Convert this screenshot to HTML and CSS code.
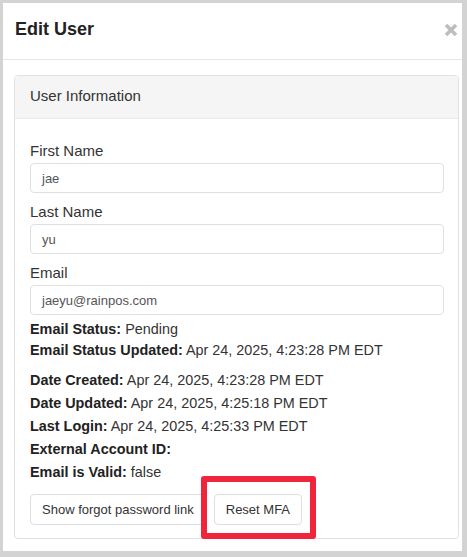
FILE: index.html
```html
<!DOCTYPE html>
<html lang="en">
<head>
<meta charset="utf-8">
<title>Edit User</title>
<link rel="stylesheet" href="styles.css">
</head>
<body>
<div class="modal">
  <div class="modal-header">
    <h4 class="modal-title">Edit User</h4>
    <button class="close" aria-label="Close">
      <svg width="14" height="14" viewBox="0 0 14 14"><path d="M2 2 L12 12 M12 2 L2 12" stroke="#bdbdbd" stroke-width="3.6" stroke-linecap="butt"/></svg>
    </button>
  </div>
  <div class="modal-body">
    <div class="panel">
      <div class="panel-heading">User Information</div>
      <div class="panel-body">
        <div class="field">
          <label class="label">First Name</label>
          <div class="input">jae</div>
        </div>
        <div class="field">
          <label class="label">Last Name</label>
          <div class="input">yu</div>
        </div>
        <div class="field field-last">
          <label class="label">Email</label>
          <div class="input">jaeyu@rainpos.com</div>
        </div>
        <div class="info info-a">
          <div><b>Email Status:</b> Pending</div>
          <div><b>Email Status Updated:</b> Apr 24, 2025, 4:23:28 PM EDT</div>
        </div>
        <div class="info info-b">
          <div><b>Date Created:</b> Apr 24, 2025, 4:23:28 PM EDT</div>
          <div><b>Date Updated:</b> Apr 24, 2025, 4:25:18 PM EDT</div>
          <div><b>Last Login:</b> Apr 24, 2025, 4:25:33 PM EDT</div>
          <div><b>External Account ID:</b></div>
          <div><b>Email is Valid:</b> false</div>
        </div>
        <div class="actions">
          <button class="btn">Show forgot password link</button>
          <span class="highlight"><button class="btn">Reset MFA</button></span>
        </div>
      </div>
    </div>
  </div>
</div>
</body>
</html>
```
FILE: styles.css
```css
* { box-sizing: border-box; }
html, body { margin: 0; }
body {
  background: #d3d3d3;
  padding: 3px 5px 6px 3px;
  font-family: "Liberation Sans", Arial, Helvetica, sans-serif;
  color: #333;
  width: 467px;
  height: 557px;
  overflow: hidden;
}
.modal {
  background: #fff;
  width: 459px;
  height: 548px;
}
.modal-header {
  height: 57px;
  border-bottom: 1px solid #e6e6e6;
  display: flex;
  align-items: center;
  justify-content: space-between;
  padding: 0 4px 3px 12px;
}
.modal-title {
  margin: 0;
  font-size: 18px;
  font-weight: bold;
  color: #222;
}
.close {
  border: 0;
  background: none;
  padding: 0;
  width: 14px;
  height: 14px;
  display: flex;
}
.modal-body {
  padding: 15px 3px 12px 11px;
}
.panel {
  border: 1px solid #e1e1e1;
  border-radius: 4px;
}
.panel-heading {
  height: 43px;
  background: #f5f5f5;
  border-bottom: 1px solid #e9e9e9;
  border-radius: 3px 3px 0 0;
  display: flex;
  align-items: center;
  padding: 0 15px 3px;
  font-size: 15px;
  color: #333;
}
.panel-body {
  padding: 22px 14px 13px 15px;
}
.field { margin-bottom: 9px; }
.field-last { margin-bottom: 4px; }
.label {
  display: block;
  font-size: 15px;
  line-height: 20px;
  margin-bottom: 2px;
  color: #333;
}
.input {
  height: 30px;
  border: 1px solid #dde1e6;
  border-radius: 4px;
  padding: 0 11px;
  display: flex;
  align-items: center;
  font-size: 13px;
  color: #555;
}
.info {
  font-size: 14.4px;
  color: #333;
}
.info b { color: #222; }
.info-a { line-height: 21px; }
.info-b { line-height: 23px; margin-top: 8px; }
.actions {
  margin-top: 10px;
  display: flex;
  gap: 8px;
}
.btn {
  height: 31px;
  padding: 0 11px;
  font-family: inherit;
  font-size: 13px;
  color: #333;
  background: #fff;
  border: 1px solid #dcdfe4;
  border-radius: 4px;
}
.highlight {
  position: relative;
  display: flex;
}
.highlight::after {
  content: "";
  position: absolute;
  top: -18px;
  left: -13px;
  right: -14px;
  bottom: -14px;
  border: 6px solid #f0253c;
  border-radius: 3px;
  pointer-events: none;
}
```
